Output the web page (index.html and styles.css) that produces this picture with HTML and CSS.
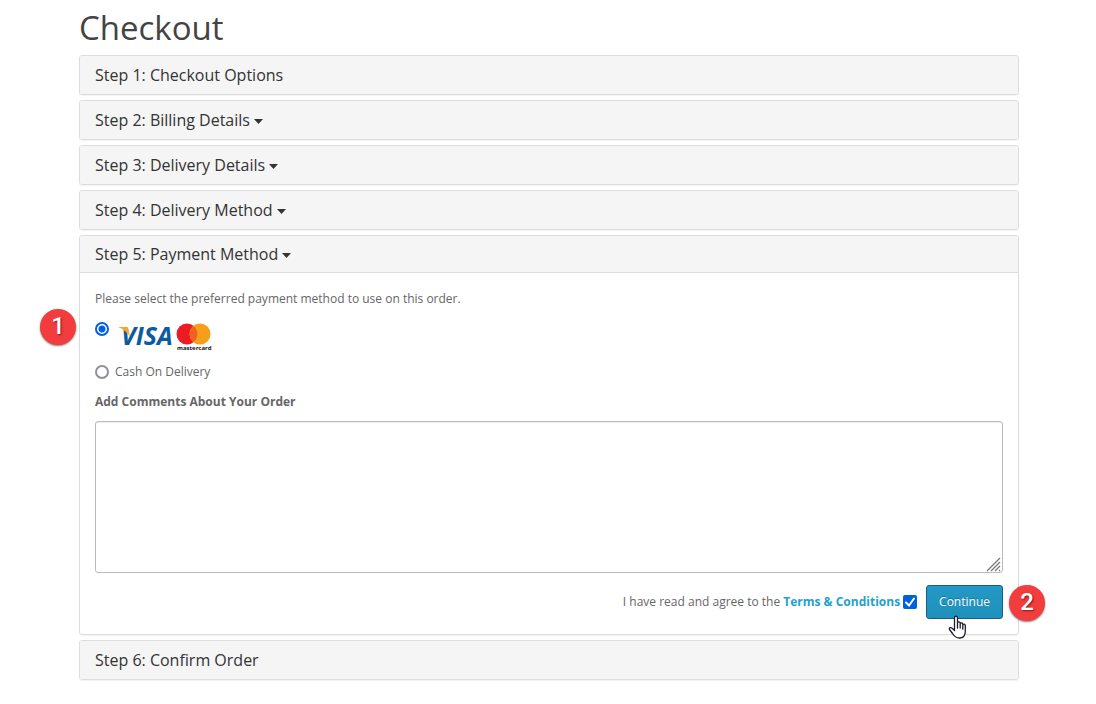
FILE: index.html
```html
<!DOCTYPE html>
<html lang="en">
<head>
<meta charset="utf-8">
<title>Checkout</title>
<link rel="stylesheet" href="styles.css">
</head>
<body>
<main class="checkout">
  <h1 class="title">Checkout</h1>
  <div class="steps">
    <section class="panel"><h2 class="heading">Step 1: Checkout Options</h2></section>
    <section class="panel"><h2 class="heading"><a class="toggle" href="#billing">Step 2: Billing Details<svg class="caret" viewBox="0 0 9 5"><path d="M0 0h9L4.500 5z"/></svg></a></h2></section>
    <section class="panel"><h2 class="heading"><a class="toggle" href="#delivery">Step 3: Delivery Details<svg class="caret" viewBox="0 0 9 5"><path d="M0 0h9L4.500 5z"/></svg></a></h2></section>
    <section class="panel"><h2 class="heading"><a class="toggle" href="#shipping">Step 4: Delivery Method<svg class="caret" viewBox="0 0 9 5"><path d="M0 0h9L4.500 5z"/></svg></a></h2></section>
    <section class="panel" id="payment">
      <h2 class="heading heading-open"><a class="toggle" href="#payment">Step 5: Payment Method<svg class="caret" viewBox="0 0 9 5"><path d="M0 0h9L4.500 5z"/></svg></a></h2>
      <form class="body">
        <p class="intro">Please select the preferred payment method to use on this order.</p>
        <div class="option option-card">
          <span class="marker marker-left">1</span>
          <input class="radio" type="radio" name="method" id="card" checked>
          <label for="card">
            <svg class="cards" viewBox="0 0 96 32" role="img" aria-label="Visa and Mastercard">
              <text class="visa" x="6" y="24">VISA</text>
              <path d="M3 6h8q2 0 2.500 2l1.500 8Q11 9 3 6z" fill="#f7a823"/>
              <circle cx="72" cy="13" r="10.500" fill="#eb1c26"/>
              <circle cx="85" cy="13" r="10.500" fill="#f79e1b"/>
              <path d="M78.500 4.800a10.500 10.500 0 0 1 0 16.400a10.500 10.500 0 0 1 0-16.400z" fill="#f26122"/>
              <text class="mastercard" x="62" y="29">mastercard</text>
            </svg>
          </label>
        </div>
        <div class="option">
          <input class="radio" type="radio" name="method" id="cash">
          <label for="cash">Cash On Delivery</label>
        </div>
        <label class="comment-label" for="comment">Add Comments About Your Order</label>
        <div class="comment-wrap">
          <textarea class="comment" id="comment"></textarea>
          <svg class="grip" viewBox="0 0 15 15"><path d="M0 14L13 1M4 14L13 5M8 14L13 9M12 14l1-1" stroke="#777" stroke-width="1.300" fill="none"/></svg>
        </div>
        <div class="actions">
          <label class="agree" for="agree">I have read and agree to the <a class="terms" href="#terms">Terms &amp; Conditions</a></label>
          <input class="check" type="checkbox" id="agree" checked>
          <button class="continue" type="button">Continue</button>
          <span class="marker marker-right">2</span>
          <svg class="cursor" viewBox="0 0 19 25"><path d="M6.500 15V3.200Q6.500 1.200 8 1.200T9.500 3.200V9.500V8Q9.500 6.800 10.800 6.800T12.200 8V10V9Q12.200 7.800 13.500 7.800T14.800 9V11V10.200Q14.800 9.200 16 9.200T17.300 10.500V16Q17.300 23 11.500 23C7.500 23 6 21 4.500 18.500L1.500 14.500Q1 13.200 2 12.700Q3.200 12.300 4.200 13.300L6.500 15.500M9.500 9v4M12.200 10v3M14.800 11v3" fill="#fff" stroke="#1b1b2c" stroke-width="1.300" stroke-linejoin="round" stroke-linecap="round"/></svg>
        </div>
      </form>
    </section>
    <section class="panel"><h2 class="heading">Step 6: Confirm Order</h2></section>
  </div>
</main>
</body>
</html>
```
FILE: styles.css
```css
* { box-sizing: border-box; }
body {
  margin: 0;
  background: #fff;
  color: #666;
  font: 12px/20px "Open Sans", sans-serif;
}
.checkout { padding: 10px 77px 20px 79px; }
.title {
  margin: 0 0 9px;
  color: #444;
  font-size: 33px;
  font-weight: 400;
  line-height: 36px;
}
.steps { display: flex; flex-direction: column; gap: 5px; }
.panel {
  border: 1px solid #ddd;
  border-radius: 3px;
  box-shadow: 0 1px 1px rgba(0, 0, 0, .05);
}
.heading {
  margin: 0;
  padding: 9px 15px;
  border-radius: 2px;
  background: #f5f5f5;
  color: #333;
  font-size: 16px;
  font-weight: 400;
  line-height: 20px;
}
.heading-open { border-bottom: 1px solid #ddd; border-radius: 2px 2px 0 0; padding: 8px 15px; }
.toggle { color: inherit; text-decoration: none; }
.caret { width: 9px; height: 5px; margin-left: 4px; vertical-align: 2px; fill: #333; }
.body { padding: 16px 15px 15px; }
.intro { margin: 0 0 10px; }
.option { position: relative; display: flex; align-items: center; gap: 6px; margin-bottom: 10px; }
.option-card { align-items: flex-start; margin-bottom: 9px; }
.option-card label { display: flex; }
.radio {
  appearance: none;
  flex: none;
  width: 14px;
  height: 14px;
  margin: 0;
  border: 2px solid #8f8f9d;
  border-radius: 50%;
  background: #fff;
}
.radio:checked {
  border-color: #0061e0;
  background: radial-gradient(circle, #0061e0 3px, #fff 4px);
}
.option-card .radio { margin-top: 3px; }
.cards { width: 96px; height: 32px; margin-top: 2px; overflow: visible; }
.visa { font: italic 700 25px "Open Sans", sans-serif; fill: #0c5aa0; }
.mastercard { font: 700 6px "Open Sans", sans-serif; fill: #111; }
.comment-label { display: block; margin-bottom: 9px; font-weight: 700; }
.comment-wrap { position: relative; display: flex; }
.comment {
  flex: 1;
  height: 152px;
  padding: 8px 12px;
  border: 1px solid #bbb;
  border-radius: 3px;
  color: #555;
  font: inherit;
  resize: none;
  box-shadow: inset 0 1px 1px rgba(0, 0, 0, .075);
}
.grip { position: absolute; right: 1px; bottom: 1px; width: 15px; height: 15px; }
.actions {
  position: relative;
  display: flex;
  align-items: center;
  justify-content: flex-end;
  margin-top: 12px;
}
.terms { color: #23a1d1; font-weight: 700; text-decoration: none; }
.check {
  appearance: none;
  width: 14px;
  height: 14px;
  margin: 0 9px 0 3px;
  border-radius: 2px;
  background: #0061e0 url("data:image/svg+xml,%3Csvg xmlns='http://www.w3.org/2000/svg' viewBox='0 0 14 14'%3E%3Cpath d='M3 7.500l3 3 5-7' fill='none' stroke='white' stroke-width='2' stroke-linecap='round'/%3E%3C/svg%3E");
}
.continue {
  height: 34px;
  padding: 0 12px;
  border: 1px solid #1f5c80;
  border-radius: 3px;
  background: linear-gradient(#2399c7, #1f90bb);
  color: #fff;
  font: inherit;
  text-shadow: 0 -1px 0 rgba(0, 0, 0, .25);
}
.marker {
  position: absolute;
  width: 36px;
  height: 36px;
  border-radius: 50%;
  background: #f23c3e;
  box-shadow: 0 1px 2px rgba(0, 0, 0, .5);
  color: #fff;
  font: 500 24px/35px Roboto, sans-serif;
  text-align: center;
  text-shadow: 1px 1px 2px rgba(0, 0, 0, .5);
}
.marker-left { left: -55px; top: -10px; }
.marker-right { right: -42px; top: 0; }
.cursor { position: absolute; right: 36px; top: 30px; width: 19px; height: 25px; }
```
